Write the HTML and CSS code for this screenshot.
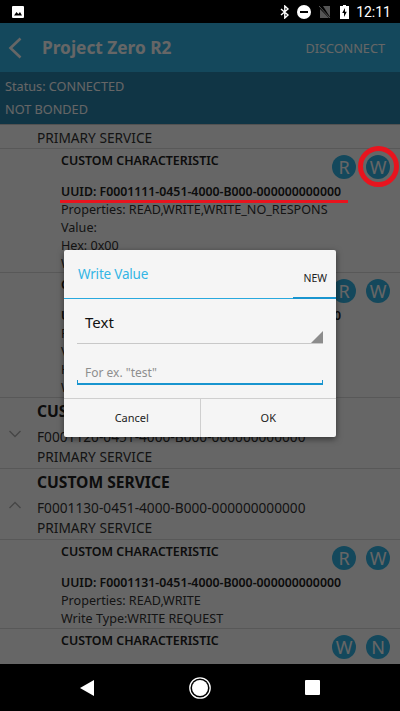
FILE: index.html
```html
<!DOCTYPE html>
<html lang="en">
<head>
    <meta charset="UTF-8">
    <meta name="viewport" content="width=device-width, initial-scale=1.0">
    <title>Project Zero R2</title>
    <link rel="stylesheet" href="styles.css">
</head>
<body>
    <div class="phone">
        <div class="status-bar">
            <svg class="sb-pic" width="12" height="12" viewBox="0 0 12 12"><path fill="#fff" d="M1 0h10a1 1 0 0 1 1 1v10a1 1 0 0 1-1 1H1a1 1 0 0 1-1-1V1a1 1 0 0 1 1-1z"/><path fill="#000" d="M2 9.5l2.5-3.5 1.8 2L8 6l2 3.500z"/></svg>
            <span class="sb-spacer"></span>
            <svg width="10" height="14" viewBox="0 0 10 14"><path fill="none" stroke="#fff" stroke-width="1.4" d="M1 4l7 6-3.200 3V1L8 4l-7 6"/></svg>
            <svg class="sb-dnd" width="14" height="14" viewBox="0 0 14 14"><circle cx="7" cy="7" r="7" fill="#fff"/><rect x="3" y="6" width="8" height="2" fill="#000"/></svg>
            <svg class="sb-sim" width="12" height="14" viewBox="0 0 12 14"><path fill="#555" d="M4 1h7v11z"/><path fill="#555" d="M1 4v9h9z"/><path stroke="#555" stroke-width="1" d="M0 1l11 12"/></svg>
            <svg class="sb-batt" width="9" height="14" viewBox="0 0 9 14"><path fill="#fff" d="M3 0h3v1h3v13H0V1h3z"/><path fill="#000" d="M5 3L2.200 8H4v4l2.800-5.200H5z"/></svg>
            <span class="sb-time">12:11</span>
        </div>

        <div class="screen">
            <header class="app-bar">
                <svg class="back" width="16" height="22" viewBox="0 0 16 22"><path fill="none" stroke="#fff" stroke-width="2.6" d="M12.500 1.500L2.500 11l10 9.500"/></svg>
                <h1>Project Zero R2</h1>
                <span class="disconnect">DISCONNECT</span>
            </header>
            <div class="conn-status">
                <p>Status: CONNECTED</p>
                <p>NOT BONDED</p>
            </div>

            <div class="list">
                <div class="service service-tail">
                    <p>PRIMARY SERVICE</p>
                </div>

                <div class="char">
                    <div class="char-head">
                        <h3>CUSTOM CHARACTERISTIC</h3>
                        <div class="char-btns">
                            <span class="round-btn">R</span>
                            <span class="round-btn">W</span>
                        </div>
                    </div>
                    <p class="uuid">UUID: F0001111-0451-4000-B000-000000000000</p>
                    <p>Properties: READ,WRITE,WRITE_NO_RESPONS</p>
                    <p>Value:</p>
                    <p>Hex: 0x00</p>
                    <p>Write Type:WRITE REQUEST</p>
                </div>

                <div class="char char-tall">
                    <div class="char-head">
                        <h3>CUSTOM CHARACTERISTIC</h3>
                        <div class="char-btns">
                            <span class="round-btn">R</span>
                            <span class="round-btn">W</span>
                        </div>
                    </div>
                    <p class="uuid">UUID: F0001112-0451-4000-B000-000000000000</p>
                    <p>Properties: READ,WRITE</p>
                    <p>Value:</p>
                    <p>Hex: 0x00</p>
                    <p>Write Type:WRITE REQUEST</p>
                </div>

                <div class="service">
                    <svg class="chevron" width="14" height="8" viewBox="0 0 14 8"><path fill="none" stroke="#b0b0b0" stroke-width="1.4" d="M1.500 1l5.500 5.500L12.500 1"/></svg>
                    <h2>CUSTOM SERVICE</h2>
                    <p>F0001120-0451-4000-B000-000000000000</p>
                    <p>PRIMARY SERVICE</p>
                </div>

                <div class="service">
                    <svg class="chevron" width="14" height="8" viewBox="0 0 14 8"><path fill="none" stroke="#b0b0b0" stroke-width="1.4" d="M1.500 7l5.500-5.500L12.500 7"/></svg>
                    <h2>CUSTOM SERVICE</h2>
                    <p>F0001130-0451-4000-B000-000000000000</p>
                    <p>PRIMARY SERVICE</p>
                </div>

                <div class="char char-short">
                    <div class="char-head">
                        <h3>CUSTOM CHARACTERISTIC</h3>
                        <div class="char-btns">
                            <span class="round-btn">R</span>
                            <span class="round-btn">W</span>
                        </div>
                    </div>
                    <p class="uuid">UUID: F0001131-0451-4000-B000-000000000000</p>
                    <p>Properties: READ,WRITE</p>
                    <p>Write Type:WRITE REQUEST</p>
                </div>

                <div class="char char-last">
                    <div class="char-head">
                        <h3>CUSTOM CHARACTERISTIC</h3>
                        <div class="char-btns">
                            <span class="round-btn">W</span>
                            <span class="round-btn">N</span>
                        </div>
                    </div>
                </div>
            </div>

            <div class="scrim"></div>

            <!-- red annotations sit on top of the dimmed page -->
            <div class="mark-line"></div>
            <div class="mark-circle"></div>

            <div class="dialog">
                <div class="dialog-head">
                    <span class="dialog-title">Write Value</span>
                    <span class="dialog-new">NEW</span>
                </div>
                <div class="dialog-body">
                    <div class="select">
                        <span>Text</span>
                        <i class="select-arrow"></i>
                    </div>
                    <div class="input">For ex. "test"</div>
                </div>
                <div class="dialog-btns">
                    <button class="dialog-btn">Cancel</button>
                    <button class="dialog-btn">OK</button>
                </div>
            </div>
        </div>

        <div class="nav-bar">
            <svg width="16" height="16" viewBox="0 0 16 16"><path fill="#fff" d="M15 0v16L1 8z"/></svg>
            <svg width="22" height="22" viewBox="0 0 22 22"><circle cx="11" cy="11" r="10.200" fill="none" stroke="#fff" stroke-width="1.3"/><circle cx="11" cy="11" r="8" fill="#fff"/></svg>
            <svg width="15" height="15" viewBox="0 0 15 15"><rect width="15" height="15" rx="1" fill="#fff"/></svg>
        </div>
    </div>
</body>
</html>
```

FILE: styles.css
```css
* {
    box-sizing: border-box;
}
html, body {
    margin: 0;
    padding: 0;
}
body {
    width: 400px;
    height: 711px;
    overflow: hidden;
    background-color: #000;
    font-family: "Noto Sans", sans-serif;
}
p, h1, h2, h3 {
    margin: 0;
}
.phone {
    display: flex;
    flex-direction: column;
    height: 711px;
}

.status-bar {
    height: 23px;
    display: flex;
    align-items: center;
    padding: 0 9px 0 12px;
    background-color: #000;
    color: #fff;
    flex-shrink: 0;
}
.sb-spacer {
    flex: 1;
}
.sb-dnd {
    margin-left: 7px;
}
.sb-sim {
    margin-left: 8px;
}
.sb-batt {
    margin-left: 9px;
}
.sb-time {
    margin-left: 7px;
    font-family: Roboto, sans-serif;
    font-size: 14px;
}

.screen {
    position: relative;
    flex: 1;
    overflow: hidden;
    background-color: #fff;
    display: flex;
    flex-direction: column;
}
.app-bar {
    height: 49px;
    display: flex;
    align-items: center;
    padding: 0 15px 0 8px;
    background-color: #33b5e5;
    color: #fff;
    flex-shrink: 0;
}
.back {
    margin-right: 18px;
}
.app-bar h1 {
    flex: 1;
    font-size: 17.3px;
    font-weight: 700;
}
.disconnect {
    font-size: 12.7px;
}
.conn-status {
    height: 52px;
    padding: 3px 5px 0;
    background-color: #2a84ac;
    color: #fff;
    font-size: 12.7px;
    line-height: 23px;
    flex-shrink: 0;
}

.list {
    flex: 1;
    overflow: hidden;
    color: #333;
    border-top: 1px solid #ccc;
}
.service {
    position: relative;
    height: 71px;
    padding: 0 0 0 37px;
    border-bottom: 1px solid #ddd;
    font-size: 13.7px;
    line-height: 20px;
}
.service-tail {
    height: 24px;
    padding-top: 3px;
}
.service h2 {
    font-size: 15.6px;
    font-weight: 700;
    line-height: 26px;
    margin-bottom: 3px;
    color: #222;
}
.chevron {
    position: absolute;
    left: 8px;
    top: 32px;
}
.char {
    height: 124px;
    padding: 3px 10px 0 61px;
    border-bottom: 1px solid #ddd;
    font-size: 12.6px;
    line-height: 18px;
}
.char-tall {
    height: 125px;
}
.char-short {
    height: 89px;
}
.char-last {
    border-bottom: none;
}
.char-head {
    display: flex;
    justify-content: space-between;
    height: 31px;
}
.char-head h3 {
    font-size: 12.4px;
    font-weight: 600;
    line-height: 18px;
    color: #222;
}
.uuid {
    font-size: 12.3px;
    font-weight: 600;
    color: #222;
}
.char-btns {
    display: flex;
    gap: 10px;
    padding-top: 3px;
}
.round-btn {
    width: 24px;
    height: 24px;
    border-radius: 50%;
    background-color: #33b5e5;
    color: #fff;
    font-size: 18px;
    line-height: 24px;
    text-align: center;
}

.scrim {
    position: absolute;
    inset: 0;
    background-color: rgba(0, 0, 0, 0.6);
}
.mark-line {
    position: absolute;
    left: 60px;
    top: 177px;
    width: 288px;
    height: 3px;
    background-color: #e8141e;
}
.mark-circle {
    position: absolute;
    left: 358px;
    top: 123px;
    width: 41px;
    height: 41px;
    border: 5px solid #e8141e;
    border-radius: 50%;
}

.dialog {
    position: absolute;
    left: 64px;
    top: 227px;
    width: 272px;
    height: 187px;
    background-color: #f5f5f5;
    border-radius: 2px;
    box-shadow: 0 2px 6px rgba(0, 0, 0, 0.5);
    display: flex;
    flex-direction: column;
}
.dialog-head {
    position: relative;
    height: 49px;
    display: flex;
    justify-content: space-between;
    padding: 15px 9px 0 14px;
    border-bottom: 1px solid #29a9de;
}
.dialog-head::after {
    content: "";
    position: absolute;
    right: 0;
    bottom: -1px;
    width: 43px;
    height: 2px;
    background-color: #1995cf;
}
.dialog-title {
    color: #33b5e5;
    font-size: 13.500px;
    letter-spacing: -0.2px;
}
.dialog-new {
    font-size: 10.500px;
    color: #222;
    padding-top: 6px;
}
.dialog-body {
    flex: 1;
    padding: 0 13px;
}
.select {
    position: relative;
    height: 45px;
    padding: 13px 8px 0;
    border-bottom: 1px solid #c8c8c8;
    font-size: 15px;
    color: #111;
}
.select-arrow {
    position: absolute;
    right: 0;
    bottom: 0;
    border-style: solid;
    border-width: 0 0 12px 12px;
    border-color: transparent transparent #8c8c8c transparent;
}
.input {
    height: 41px;
    padding: 20px 7px 0;
    border: solid #1995cf;
    border-width: 0 1px 2px;
    border-image: linear-gradient(to top, #1995cf 4px, transparent 4px) 1;
    font-size: 12px;
    color: #8e8e8e;
}
.dialog-btns {
    height: 39px;
    display: flex;
    border-top: 1px solid #cfcfcf;
}
.dialog-btn {
    flex: 1;
    padding: 0 0 2px;
    border: none;
    background: none;
    font-family: inherit;
    font-size: 11px;
    color: #222;
}
.dialog-btn:first-child {
    border-right: 1px solid #cfcfcf;
}

.nav-bar {
    height: 47px;
    display: flex;
    align-items: center;
    justify-content: space-between;
    padding: 0 80px 0 79px;
    background-color: #000;
    flex-shrink: 0;
}
```
